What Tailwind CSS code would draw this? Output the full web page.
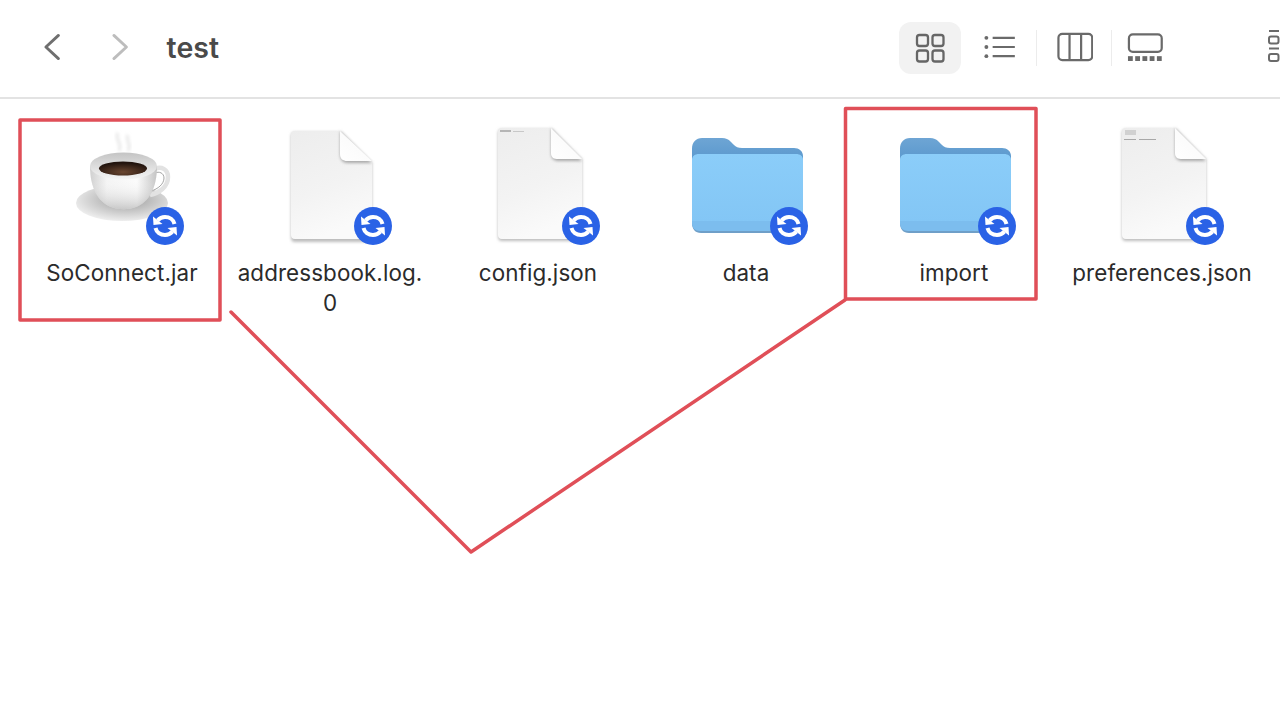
<!DOCTYPE html>
<html lang="en">
<head>
<meta charset="utf-8">
<title>test</title>
<script src="https://cdn.jsdelivr.net/npm/@tailwindcss/browser@4"></script>
</head>
<body class="bg-white">
<div class="relative w-[1280px] h-[714px] overflow-hidden bg-white font-['Inter','Liberation_Sans',sans-serif]">
  <svg width="0" height="0" class="absolute">
    <defs>
      <linearGradient id="paper" x1="0" y1="0" x2="0.3" y2="1"><stop offset="0" stop-color="#ededed"/><stop offset="0.6" stop-color="#f3f3f3"/><stop offset="1" stop-color="#fafafa"/></linearGradient>
      <linearGradient id="fold" x1="0" y1="1" x2="1" y2="0"><stop offset="0" stop-color="#ffffff"/><stop offset="0.55" stop-color="#fbfbfb"/><stop offset="1" stop-color="#e2e2e2"/></linearGradient>
      <linearGradient id="folderFront" x1="0" y1="0" x2="0" y2="1"><stop offset="0" stop-color="#8bcdf9"/><stop offset="1" stop-color="#83c6f5"/></linearGradient>
      <linearGradient id="folderBack" x1="0" y1="0" x2="0" y2="1"><stop offset="0" stop-color="#6ea5d4"/><stop offset="0.6" stop-color="#4f91ca"/><stop offset="1" stop-color="#4a8dc8"/></linearGradient>
      <linearGradient id="cup" x1="0" y1="0" x2="1" y2="0"><stop offset="0" stop-color="#d0d0d0"/><stop offset="0.25" stop-color="#f4f4f4"/><stop offset="0.7" stop-color="#fbfbfb"/><stop offset="1" stop-color="#c4c4c4"/></linearGradient>
      <linearGradient id="cupV" x1="0" y1="0" x2="0" y2="1"><stop offset="0.3" stop-color="#ffffff" stop-opacity="0"/><stop offset="1" stop-color="#9a9a9a" stop-opacity="0.5"/></linearGradient>
      <linearGradient id="rim" x1="0" y1="0" x2="0" y2="1"><stop offset="0" stop-color="#c4c4c4"/><stop offset="1" stop-color="#f5f5f5"/></linearGradient>
      <radialGradient id="saucer" cx="0.55" cy="0.4" r="0.62"><stop offset="0" stop-color="#9a9a9a"/><stop offset="0.7" stop-color="#d6d6d6"/><stop offset="1" stop-color="#f0f0f0"/></radialGradient>
      <radialGradient id="coffee" cx="0.5" cy="0.75" r="0.65"><stop offset="0" stop-color="#6a4630"/><stop offset="1" stop-color="#21130d"/></radialGradient>
      <filter id="soft" x="-20%" y="-20%" width="140%" height="140%"><feGaussianBlur stdDeviation="1.6"/></filter>

      <symbol id="sync" viewBox="0 0 38 38">
        <circle cx="19" cy="19" r="19" fill="#2a62e6"/>
        <path d="M28.500 17C27.500 12.800 23.600 10 19 10c-3 0-5.400 1.100-7.400 3.300" fill="none" stroke="#fff" stroke-width="4"/>
        <path d="M7 9.500 7.500 18 16.500 17Z" fill="#fff"/>
        <path d="M9.500 21C10.500 25.200 14.400 28 19 28c3 0 5.400-1.100 7.400-3.300" fill="none" stroke="#fff" stroke-width="4"/>
        <path d="M31 28.500 30.500 20 21.500 21Z" fill="#fff"/>
      </symbol>

      <symbol id="folder" viewBox="0 0 120 120">
        <path d="M6 24c0-7 4-11 10-11h20c4 0 6 1 9 4l3 3c2 2 4 3 8 3h52c5 0 9 3 9 8v40H6Z" fill="url(#folderBack)"/>
        <path d="M6 36c0-4 3-7 7-7h97c4 0 7 3 7 7v62c0 6-3 10-9 10H15c-6 0-9-4-9-10Z" fill="#6f9fc8"/>
        <path d="M6 35c0-4 3-6 7-6h97c4 0 7 2 7 6v62H6Z" fill="url(#folderFront)"/>
        <path d="M6 96h111v2c0 5-3 8-8 8H14c-5 0-8-3-8-8Z" fill="#7cbdee"/>
      </symbol>
    </defs>
  </svg>

  <header class="h-[99px] border-b-2 border-[#e3e3e3] flex items-start text-[#6a6a6a]">
    <svg class="ml-[43px] mt-[33px]" width="20" height="28" viewBox="0 0 20 28" fill="none" stroke="#6f6f6f" stroke-width="3" stroke-linecap="round" stroke-linejoin="round"><path d="M16 2 3 14l13 12"/></svg>
    <svg class="ml-[49px] mt-[33px]" width="20" height="28" viewBox="0 0 20 28" fill="none" stroke="#bdbdbd" stroke-width="3" stroke-linecap="round" stroke-linejoin="round"><path d="M3 2l13 12L3 26"/></svg>
    <h1 class="ml-[36px] mt-[30px] w-[53px] text-[28.500px] leading-9 font-semibold text-[#4a4a4a]">test</h1>

    <div class="ml-[680px] mt-[22px] w-[62px] h-[52px] rounded-xl bg-[#f2f2f2] flex items-center justify-center shrink-0">
      <svg width="30" height="30" viewBox="0 0 30 30" fill="none" stroke="#666" stroke-width="2.300"><rect x="2" y="2" width="11" height="11" rx="2.500"/><rect x="17.500" y="2" width="11" height="11" rx="2.500"/><rect x="2" y="17.500" width="11" height="11" rx="2.500"/><rect x="17.500" y="17.500" width="11" height="11" rx="2.500"/></svg>
    </div>
    <svg class="ml-[22px] mt-[34px]" width="34" height="26" viewBox="0 0 34 26" fill="none"><g fill="#6a6a6a"><circle cx="3.500" cy="3.500" r="2"/><circle cx="3.500" cy="13" r="2"/><circle cx="3.500" cy="22.500" r="2"/></g><g stroke="#6a6a6a" stroke-width="2.200"><path d="M10 3.500h23M10 13h23M10 22.500h23"/></g></svg>
    <div class="ml-[20px] mt-[30px] w-px h-[36px] bg-[#ececec]"></div>
    <svg class="ml-[20px] mt-[32px]" width="38" height="30" viewBox="0 0 38 30" fill="none" stroke="#6a6a6a" stroke-width="2.300"><rect x="1.500" y="1.500" width="35" height="27" rx="4"/><path d="M13 1.500v27M25 1.500v27"/></svg>
    <div class="ml-[18px] mt-[30px] w-px h-[36px] bg-[#ececec]"></div>
    <svg class="ml-[15px] mt-[32px]" width="38" height="30" viewBox="0 0 38 30"><rect x="2" y="2" width="34" height="18" rx="4" fill="none" stroke="#6a6a6a" stroke-width="2.300"/><g fill="#6a6a6a"><rect x="1" y="24.500" width="5" height="5"/><rect x="8.500" y="24.500" width="5" height="5"/><rect x="16" y="24.500" width="5" height="5"/><rect x="23.500" y="24.500" width="5" height="5"/><rect x="31" y="24.500" width="5" height="5"/></g></svg>
    <svg class="ml-[104px] mt-[29px] shrink-0" width="12" height="36" viewBox="0 0 12 36" fill="none" stroke="#6a6a6a" stroke-width="2"><path d="M1 2h10"/><rect x="1" y="7.500" width="9.500" height="7" rx="2"/><path d="M1 19.500h10"/><rect x="1" y="25" width="9.500" height="7" rx="2"/></svg>
  </header>

  <main class="grid grid-cols-[repeat(6,208px)] pl-[18px] pt-[26px] text-[22.400px] leading-[30px] text-[#2b2b2b] tracking-[0.1px] text-center">
    <div class="relative flex flex-col items-center">
      <svg width="120" height="120" viewBox="0 0 120 120">
        <g filter="url(#soft)" fill="none" stroke="#ececec" stroke-width="3.500"><path d="M56 8c-4 6 5 10 1 18M66 10c-3 5 4 9 0 16"/></g>
        <ellipse cx="60" cy="78" rx="46" ry="18" fill="url(#saucer)"/>
        <path d="M93 44c6-3 13 0 13 8 0 10-9 16-18 18" fill="none" stroke="#e2e2e2" stroke-width="4.500"/>
        <path d="M93 48c4-2 9 0 9 5 0 6-6 11-13 13" fill="none" stroke="#a5a5a5" stroke-width="1"/>
        <path d="M28 41c0 22 8 36 21 41 8 3 17 3 25 0 13-5 21-19 21-41Z" fill="url(#cup)"/>
        <path d="M28 41c0 22 8 36 21 41 8 3 17 3 25 0 13-5 21-19 21-41Z" fill="url(#cupV)"/>
        <ellipse cx="61.500" cy="41" rx="33.500" ry="13.500" fill="url(#rim)"/>
        <ellipse cx="61" cy="43.500" rx="24" ry="7" fill="url(#coffee)"/>
      </svg>
      <svg class="absolute left-[128px] top-[82px]" width="38" height="38"><use href="#sync"/></svg>
      <div class="mt-[13px]">SoConnect.jar</div>
    </div>

    <div class="relative flex flex-col items-center">
      <svg width="120" height="120" viewBox="0 0 120 120">
        <path d="M21 10c0-2 1-4 4-4h45l32 31v74c0 3-2 5-4 5H25c-3 0-4-2-4-5Z" fill="#bdbdbd" filter="url(#soft)" transform="translate(0 1)"/>
        <path d="M21 10c0-2 1-4 4-4h45l32 31v73c0 2-1 4-4 4H25c-3 0-4-2-4-4Z" fill="url(#paper)"/>
        <path d="M70 6v23c0 6 3 9 8 9h24Z" fill="#a8a8a8" filter="url(#soft)"/>
        <path d="M70 6v23c0 5 3 7 7 7h25Z" fill="url(#fold)"/>
      </svg>
      <svg class="absolute left-[128px] top-[82px]" width="38" height="38"><use href="#sync"/></svg>
      <div class="mt-[13px] w-[200px]">addressbook.log.<br>0</div>
    </div>

    <div class="relative flex flex-col items-center">
      <svg width="120" height="120" viewBox="0 0 120 120">
        <path d="M20 7c0-2 1-4 4-4h49l31 30v77c0 3-2 5-4 5H24c-3 0-4-2-4-5Z" fill="#bdbdbd" filter="url(#soft)" transform="translate(0 1)"/>
        <path d="M20 7c0-2 1-4 4-4h49l31 30v77c0 2-1 4-4 4H24c-3 0-4-2-4-4Z" fill="url(#paper)"/>
        <rect x="22" y="5" width="11" height="2" fill="#b5b5b5"/><rect x="35" y="6" width="11" height="1" fill="#c8c8c8"/>
        <path d="M73 3v25c0 6 3 8 8 8h23Z" fill="#a8a8a8" filter="url(#soft)"/>
        <path d="M73 3v25c0 5 3 6 7 6h24Z" fill="url(#fold)"/>
      </svg>
      <svg class="absolute left-[128px] top-[82px]" width="38" height="38"><use href="#sync"/></svg>
      <div class="mt-[13px]">config.json</div>
    </div>

    <div class="relative flex flex-col items-center">
      <svg width="120" height="120"><use href="#folder"/></svg>
      <svg class="absolute left-[128px] top-[82px]" width="38" height="38"><use href="#sync"/></svg>
      <div class="mt-[13px]">data</div>
    </div>

    <div class="relative flex flex-col items-center">
      <svg width="120" height="120"><use href="#folder"/></svg>
      <svg class="absolute left-[128px] top-[82px]" width="38" height="38"><use href="#sync"/></svg>
      <div class="mt-[13px]">import</div>
    </div>

    <div class="relative flex flex-col items-center">
      <svg width="120" height="120" viewBox="0 0 120 120">
        <path d="M20 7c0-2 1-4 4-4h49l31 30v77c0 3-2 5-4 5H24c-3 0-4-2-4-5Z" fill="#bdbdbd" filter="url(#soft)" transform="translate(0 1)"/>
        <path d="M20 7c0-2 1-4 4-4h49l31 30v77c0 2-1 4-4 4H24c-3 0-4-2-4-4Z" fill="url(#paper)"/>
        <rect x="23" y="5" width="11" height="5" fill="#c4c4c4" opacity="0.7"/><rect x="22" y="14" width="12" height="1" fill="#a8a8a8"/><rect x="37" y="14" width="17" height="1" fill="#a8a8a8"/>
        <path d="M73 3v25c0 6 3 8 8 8h23Z" fill="#a8a8a8" filter="url(#soft)"/>
        <path d="M73 3v25c0 5 3 6 7 6h24Z" fill="url(#fold)"/>
      </svg>
      <svg class="absolute left-[128px] top-[82px]" width="38" height="38"><use href="#sync"/></svg>
      <div class="mt-[13px]">preferences.json</div>
    </div>
  </main>

  <svg class="absolute inset-0 pointer-events-none" width="1280" height="714" viewBox="0 0 1280 714" fill="none" stroke="#e04f58" stroke-width="3.500" stroke-linejoin="round" stroke-linecap="round">
    <rect x="20" y="120" width="200" height="200"/>
    <rect x="845.500" y="108.500" width="190.500" height="190.500"/>
    <path d="M231 312 471 552 845 300"/>
  </svg>
</div>
</body>
</html>
